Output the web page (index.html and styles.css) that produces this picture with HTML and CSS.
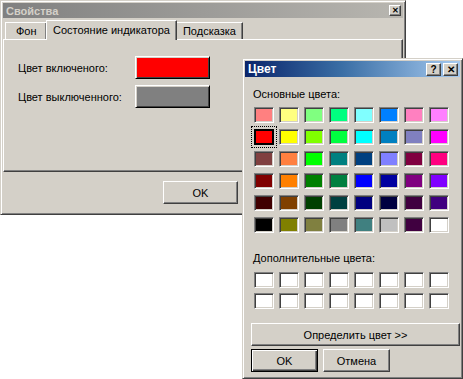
FILE: index.html
```html
<!DOCTYPE html>
<html>
  <head>
    <title>Свойства</title>
    <link rel="stylesheet" href="styles.css">
  </head>
  <body>
    <div class="win props">
      <div class="titlebar inactive">
        <span class="title">Свойства</span>
        <span class="cap-btn">&#x2715;</span>
      </div>

      <div class="tabs">
        <div class="tab">Фон</div>
        <div class="tab active">Состояние индикатора</div>
        <div class="tab">Подсказка</div>
      </div>

      <div class="panel">
        <div class="field">
          <span class="field-label">Цвет включеного:</span>
          <span class="color-btn" style="background: #ff0000"></span>
        </div>
        <div class="field">
          <span class="field-label">Цвет выключенного:</span>
          <span class="color-btn" style="background: #808080"></span>
        </div>
      </div>

      <div class="footer">
        <button class="btn ok-main">OK</button>
      </div>
    </div>

    <div class="win colors">
      <div class="titlebar active">
        <span class="title">Цвет</span>
        <span class="cap-btns">
          <span class="cap-btn big">?</span>
          <span class="cap-btn big">&#x2715;</span>
        </span>
      </div>

      <div class="section-label">Основные цвета:</div>
      <div class="swatches" id="basic"></div>

      <div class="section-label extra">Дополнительные цвета:</div>
      <div class="swatches custom" id="custom"></div>

      <button class="btn define">Определить цвет &gt;&gt;</button>
      <div class="dlg-buttons">
        <button class="btn default">OK</button>
        <button class="btn">Отмена</button>
      </div>
    </div>

    <script>
      const basic = [
        "#ff8080", "#ffff80", "#80ff80", "#00ff80", "#80ffff", "#0080ff", "#ff80c0", "#ff80ff",
        "#ff0000", "#ffff00", "#80ff00", "#00ff40", "#00ffff", "#0080c0", "#8080c0", "#ff00ff",
        "#804040", "#ff8040", "#00ff00", "#008080", "#004080", "#8080ff", "#800040", "#ff0080",
        "#800000", "#ff8000", "#008000", "#008040", "#0000ff", "#0000a0", "#800080", "#8000ff",
        "#400000", "#804000", "#004000", "#004040", "#000080", "#000040", "#400040", "#400080",
        "#000000", "#808000", "#808040", "#808080", "#408080", "#c0c0c0", "#400040", "#ffffff",
      ];

      const basicGrid = document.getElementById("basic");
      basic.forEach((color, i) => {
        const cell = document.createElement("span");
        cell.className = i === 8 ? "swatch selected" : "swatch";
        cell.style.background = color;
        basicGrid.appendChild(cell);
      });

      const customGrid = document.getElementById("custom");
      for (let i = 0; i < 16; i++) {
        const cell = document.createElement("span");
        cell.className = "swatch";
        cell.style.background = "#ffffff";
        customGrid.appendChild(cell);
      }
    </script>
  </body>
</html>
```

FILE: styles.css
```css
body {
  margin: 0;
  width: 463px;
  height: 379px;
  background: #ffffff;
  font-family: "Liberation Sans", Arial, sans-serif;
  font-size: 11px;
  color: #000000;
  position: relative;
  overflow: hidden;
}

.win {
  position: absolute;
  box-sizing: border-box;
  background: #d4d0c8;
  border: 1px solid;
  border-color: #d4d0c8 #404040 #404040 #d4d0c8;
  box-shadow: inset 1px 1px #ffffff, inset -1px -1px #808080;
  padding: 2px;
  display: flex;
  flex-direction: column;
}

.props {
  left: 0;
  top: 0;
  width: 406px;
  height: 215px;
}

.colors {
  left: 242px;
  top: 58px;
  width: 221px;
  height: 321px;
}

/* title bars */
.titlebar {
  height: 15px;
  display: flex;
  align-items: center;
  justify-content: space-between;
  padding: 0 2px 0 3px;
  flex-shrink: 0;
}

.titlebar.inactive {
  background: linear-gradient(to right, #808080, #b8b6b0);
  color: #d4d0c8;
}

.titlebar.active {
  height: 16px;
  background: linear-gradient(to right, #0a246a, #3a6ea5 45%, #a6caf0);
  color: #ffffff;
}

.title {
  font-weight: bold;
  font-size: 11px;
}

.colors .title {
  font-size: 12px;
}

.cap-btns {
  display: flex;
  gap: 2px;
}

.cap-btn {
  box-sizing: border-box;
  width: 12px;
  height: 11px;
  background: #d4d0c8;
  border: 1px solid;
  border-color: #ffffff #404040 #404040 #ffffff;
  box-shadow: inset -1px -1px #808080;
  color: #000000;
  font-size: 8px;
  font-weight: bold;
  line-height: 9px;
  text-align: center;
}

.cap-btn.big {
  width: 15px;
  height: 13px;
  font-size: 10px;
  line-height: 11px;
}

/* tabs */
.tabs {
  display: flex;
  align-items: flex-end;
  height: 20px;
  margin-top: 1px;
  padding-left: 2px;
  position: relative;
  z-index: 1;
}

.tab {
  box-sizing: border-box;
  height: 17px;
  padding: 2px 6px 0;
  border: 1px solid;
  border-bottom: none;
  border-color: #ffffff #404040 transparent #ffffff;
  box-shadow: inset -1px 0 #808080;
  white-space: nowrap;
}

.tab:first-child {
  width: 42px;
  padding-left: 10px;
}

.tab.active {
  height: 20px;
  padding: 3px 6px 0;
  margin: 0 -1px -1px;
  background: #d4d0c8;
  position: relative;
  border-left-color: #ffffff;
}

.panel {
  box-sizing: border-box;
  height: 133px;
  border: 1px solid;
  border-color: #ffffff #404040 #404040 #ffffff;
  box-shadow: inset -1px -1px #808080;
  padding: 16px 0 0 14px;
  display: flex;
  flex-direction: column;
  gap: 6px;
}

.field {
  display: flex;
  align-items: center;
}

.field-label {
  width: 117px;
}

.color-btn {
  box-sizing: border-box;
  width: 75px;
  height: 23px;
  border: 1px solid;
  border-color: #ffffff #000000 #000000 #ffffff;
  box-shadow: inset 1px 1px #d4d0c8, inset -1px -1px #404040;
}

.footer {
  display: flex;
  padding: 9px 0 0 160px;
}

/* buttons */
.btn {
  box-sizing: border-box;
  height: 23px;
  background: #d4d0c8;
  border: 1px solid;
  border-color: #ffffff #404040 #404040 #ffffff;
  box-shadow: inset -1px -1px #808080;
  font-family: inherit;
  font-size: 11px;
  color: #000000;
  padding: 0;
}

.ok-main {
  width: 75px;
}

.btn.default {
  border: 1px solid #000000;
  box-shadow: inset 1px 1px #ffffff, inset -1px -1px #404040, inset -2px -2px #808080;
}

/* colour dialog */
.section-label {
  margin: 11px 0 0 8px;
  height: 13px;
}

.section-label.extra {
  margin-top: 19px;
}

.swatches {
  display: grid;
  grid-template-columns: repeat(8, 20px);
  grid-auto-rows: 16px;
  column-gap: 5px;
  row-gap: 6px;
  margin: 6px 0 0 9px;
}

.swatches.custom {
  row-gap: 5px;
  margin-top: 7px;
}

.swatch {
  box-sizing: border-box;
  border: 1px solid;
  border-color: #808080 #ffffff #ffffff #808080;
  box-shadow: inset 1px 1px #404040, inset -1px -1px #d4d0c8;
}

.swatch.selected {
  outline: 1px dotted #000000;
  outline-offset: 2px;
  border-color: #000000;
  box-shadow: inset 1px 1px #000000, inset -1px -1px #000000;
}

.define {
  margin: 14px 0 0 6px;
  width: 209px;
}

.dlg-buttons {
  display: flex;
  gap: 5px;
  margin: 3px 0 0 6px;
}

.dlg-buttons .btn {
  width: 67px;
  height: 23px;
}
```
